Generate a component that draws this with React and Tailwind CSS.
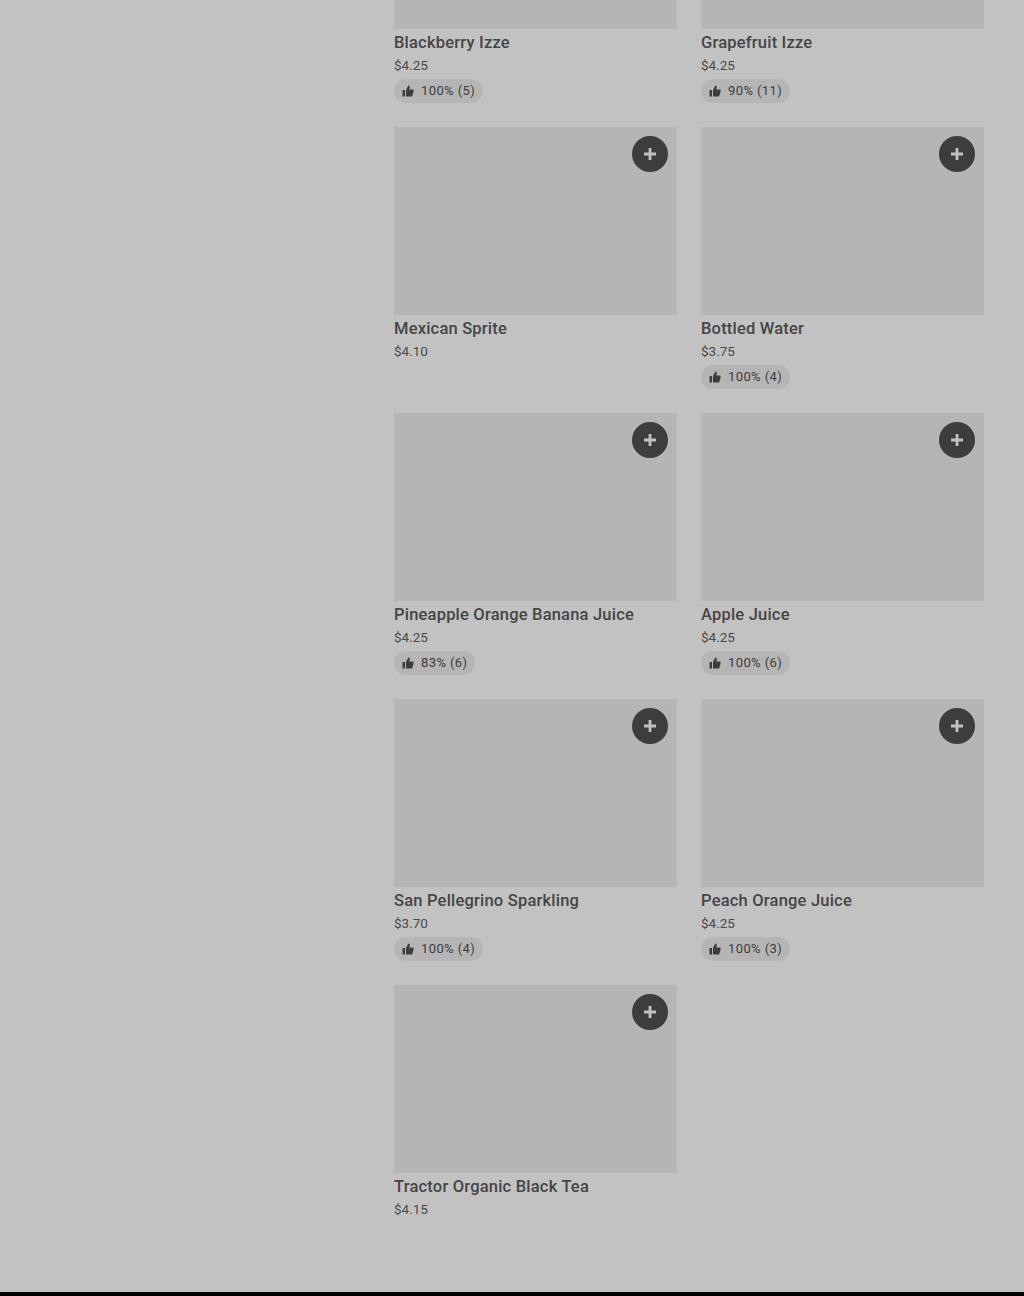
const items = [
  { name: "Blackberry Izze", price: "$4.25", rating: "100% (5)", cut: true },
  { name: "Grapefruit Izze", price: "$4.25", rating: "90% (11)", cut: true },
  { name: "Mexican Sprite", price: "$4.10" },
  { name: "Bottled Water", price: "$3.75", rating: "100% (4)" },
  { name: "Pineapple Orange Banana Juice", price: "$4.25", rating: "83% (6)" },
  { name: "Apple Juice", price: "$4.25", rating: "100% (6)" },
  { name: "San Pellegrino Sparkling", price: "$3.70", rating: "100% (4)" },
  { name: "Peach Orange Juice", price: "$4.25", rating: "100% (3)" },
  { name: "Tractor Organic Black Tea", price: "$4.15" },
];

function ThumbIcon() {
  return (
    <svg width="12" height="12" viewBox="0 0 12 12" fill="currentColor">
      <path d="M0.5 5h2.5v6.5H0.5z" />
      <path d="M4 11.500V5l2.300-4.500c1.100 0 1.700.7 1.500 1.800L7.400 4.500h4.100v2.600l-1.400 4.400z" />
    </svg>
  );
}

function PlusIcon() {
  return (
    <svg width="12" height="12" viewBox="0 0 12 12" fill="currentColor">
      <path d="M4.600 0h2.800v4.600H12v2.800H7.400V12H4.600V7.400H0V4.600h4.600z" />
    </svg>
  );
}

function Card({ item }) {
  return (
    <div>
      {item.cut ? (
        <div className="h-[29px] bg-[#b5b5b5]" />
      ) : (
        <div className="h-[188px] bg-[#b5b5b5] flex justify-end p-[9px]">
          <button className="w-9 h-9 rounded-full bg-[#3d3d3d] text-[#c2c2c2] flex items-center justify-center">
            <PlusIcon />
          </button>
        </div>
      )}
      <div className="mt-[2px] text-[16.500px] leading-[24px] font-medium tracking-[0.2px] text-[#454545]">{item.name}</div>
      <div className="text-[13.500px] leading-[21px] text-[#4a4a4a]">{item.price}</div>
      <div className="h-[27px]">
        {item.rating && (
          <div className="mt-[3px] inline-flex items-center h-6 rounded-full bg-[#b5b5b5] pl-2 pr-2 gap-[7px] text-[13px] tracking-[0.4px] text-[#3d3d3d]">
            <ThumbIcon />
            <span>{item.rating}</span>
          </div>
        )}
      </div>
    </div>
  );
}

export default function App() {
  return (
    <div className="h-[1296px] bg-[#c2c2c2] overflow-hidden flex flex-col font-['Roboto',sans-serif]">
      <div className="flex-1 pl-[394px] pr-10">
        <div className="grid grid-cols-2 gap-x-6 gap-y-6">
          {items.map((item) => (
            <Card key={item.name} item={item} />
          ))}
        </div>
      </div>
      <div className="h-1 bg-black" />
    </div>
  );
}
